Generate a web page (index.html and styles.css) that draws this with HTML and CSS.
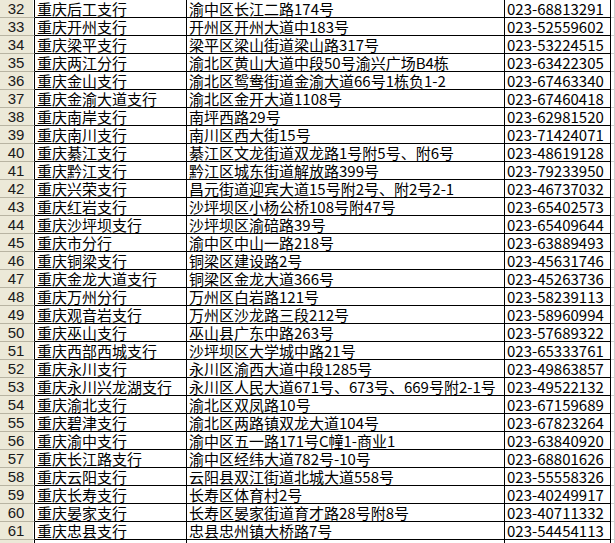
FILE: index.html
```html
<!DOCTYPE html>
<html lang="zh-CN">
<head>
<meta charset="utf-8">
<title>重庆支行列表</title>
<link rel="stylesheet" href="styles.css">
</head>
<body>
<div class="sheet">
  <div class="row"><div class="rh">32</div><div class="c a">重庆后工支行</div><div class="c b">渝中区长江二路174号</div><div class="c t">023-68813291</div><div class="e"></div></div>
  <div class="row"><div class="rh">33</div><div class="c a">重庆开州支行</div><div class="c b">开州区开州大道中183号</div><div class="c t">023-52559602</div><div class="e"></div></div>
  <div class="row"><div class="rh">34</div><div class="c a">重庆梁平支行</div><div class="c b">梁平区梁山街道梁山路317号</div><div class="c t">023-53224515</div><div class="e"></div></div>
  <div class="row"><div class="rh">35</div><div class="c a">重庆两江分行</div><div class="c b">渝北区黄山大道中段50号渝兴广场B4栋</div><div class="c t">023-63422305</div><div class="e"></div></div>
  <div class="row"><div class="rh">36</div><div class="c a">重庆金山支行</div><div class="c b">渝北区鸳鸯街道金渝大道66号1栋负1-2</div><div class="c t">023-67463340</div><div class="e"></div></div>
  <div class="row"><div class="rh">37</div><div class="c a">重庆金渝大道支行</div><div class="c b">渝北区金开大道1108号</div><div class="c t">023-67460418</div><div class="e"></div></div>
  <div class="row"><div class="rh">38</div><div class="c a">重庆南岸支行</div><div class="c b">南坪西路29号</div><div class="c t">023-62981520</div><div class="e"></div></div>
  <div class="row"><div class="rh">39</div><div class="c a">重庆南川支行</div><div class="c b">南川区西大街15号</div><div class="c t">023-71424071</div><div class="e"></div></div>
  <div class="row"><div class="rh">40</div><div class="c a">重庆綦江支行</div><div class="c b">綦江区文龙街道双龙路1号附5号、附6号</div><div class="c t">023-48619128</div><div class="e"></div></div>
  <div class="row"><div class="rh">41</div><div class="c a">重庆黔江支行</div><div class="c b">黔江区城东街道解放路399号</div><div class="c t">023-79233950</div><div class="e"></div></div>
  <div class="row"><div class="rh">42</div><div class="c a">重庆兴荣支行</div><div class="c b">昌元街道迎宾大道15号附2号、附2号2-1</div><div class="c t">023-46737032</div><div class="e"></div></div>
  <div class="row"><div class="rh">43</div><div class="c a">重庆红岩支行</div><div class="c b">沙坪坝区小杨公桥108号附47号</div><div class="c t">023-65402573</div><div class="e"></div></div>
  <div class="row"><div class="rh">44</div><div class="c a">重庆沙坪坝支行</div><div class="c b">沙坪坝区渝碚路39号</div><div class="c t">023-65409644</div><div class="e"></div></div>
  <div class="row"><div class="rh">45</div><div class="c a">重庆市分行</div><div class="c b">渝中区中山一路218号</div><div class="c t">023-63889493</div><div class="e"></div></div>
  <div class="row"><div class="rh">46</div><div class="c a">重庆铜梁支行</div><div class="c b">铜梁区建设路2号</div><div class="c t">023-45631746</div><div class="e"></div></div>
  <div class="row"><div class="rh">47</div><div class="c a">重庆金龙大道支行</div><div class="c b">铜梁区金龙大道366号</div><div class="c t">023-45263736</div><div class="e"></div></div>
  <div class="row"><div class="rh">48</div><div class="c a">重庆万州分行</div><div class="c b">万州区白岩路121号</div><div class="c t">023-58239113</div><div class="e"></div></div>
  <div class="row"><div class="rh">49</div><div class="c a">重庆观音岩支行</div><div class="c b">万州区沙龙路三段212号</div><div class="c t">023-58960994</div><div class="e"></div></div>
  <div class="row"><div class="rh">50</div><div class="c a">重庆巫山支行</div><div class="c b">巫山县广东中路263号</div><div class="c t">023-57689322</div><div class="e"></div></div>
  <div class="row"><div class="rh">51</div><div class="c a">重庆西部西城支行</div><div class="c b">沙坪坝区大学城中路21号</div><div class="c t">023-65333761</div><div class="e"></div></div>
  <div class="row"><div class="rh">52</div><div class="c a">重庆永川支行</div><div class="c b">永川区渝西大道中段1285号</div><div class="c t">023-49863857</div><div class="e"></div></div>
  <div class="row"><div class="rh">53</div><div class="c a">重庆永川兴龙湖支行</div><div class="c b">永川区人民大道671号、673号、669号附2-1号</div><div class="c t">023-49522132</div><div class="e"></div></div>
  <div class="row"><div class="rh">54</div><div class="c a">重庆渝北支行</div><div class="c b">渝北区双凤路10号</div><div class="c t">023-67159689</div><div class="e"></div></div>
  <div class="row"><div class="rh">55</div><div class="c a">重庆碧津支行</div><div class="c b">渝北区两路镇双龙大道104号</div><div class="c t">023-67823264</div><div class="e"></div></div>
  <div class="row"><div class="rh">56</div><div class="c a">重庆渝中支行</div><div class="c b">渝中区五一路171号C幢1-商业1</div><div class="c t">023-63840920</div><div class="e"></div></div>
  <div class="row"><div class="rh">57</div><div class="c a">重庆长江路支行</div><div class="c b">渝中区经纬大道782号-10号</div><div class="c t">023-68801626</div><div class="e"></div></div>
  <div class="row"><div class="rh">58</div><div class="c a">重庆云阳支行</div><div class="c b">云阳县双江街道北城大道558号</div><div class="c t">023-55558326</div><div class="e"></div></div>
  <div class="row"><div class="rh">59</div><div class="c a">重庆长寿支行</div><div class="c b">长寿区体育村2号</div><div class="c t">023-40249917</div><div class="e"></div></div>
  <div class="row"><div class="rh">60</div><div class="c a">重庆晏家支行</div><div class="c b">长寿区晏家街道育才路28号附8号</div><div class="c t">023-40711332</div><div class="e"></div></div>
  <div class="row"><div class="rh">61</div><div class="c a">重庆忠县支行</div><div class="c b">忠县忠州镇大桥路7号</div><div class="c t">023-54454113</div><div class="e"></div></div>
  <div class="row"><div class="rh"></div><div class="c a"></div><div class="c b"></div><div class="c t"></div><div class="e"></div></div>
</div>
</body>
</html>
```
FILE: styles.css
```css
html, body {
  margin: 0;
  padding: 0;
  background: #ffffff;
  overflow: hidden;
}
.sheet {
  display: flex;
  flex-direction: column;
  width: 615px;
}
.row {
  display: grid;
  grid-template-columns: 35px 152px 318px 106px 4px;
  height: 18px;
}
.rh {
  box-sizing: border-box;
  height: 18px;
  background: #ece9d8;
  border-bottom: 1px solid #b8b4a2;
  border-right: 1px solid #000;
  box-shadow: inset -1px 0 0 #ffffff;
  font-family: "Liberation Sans", Arial, sans-serif;
  font-size: 15px;
  line-height: 17px;
  color: #1a1a1a;
  text-align: center;
  padding-right: 2px;
}
.c {
  box-sizing: border-box;
  height: 18px;
  border-bottom: 1px solid #000;
  border-right: 1px solid #000;
  font-family: "Noto Sans CJK SC", sans-serif;
  font-size: 15px;
  line-height: 17px;
  color: #000;
  white-space: nowrap;
  padding-left: 2px;
}
.e {
  box-sizing: border-box;
  height: 18px;
  border-bottom: 1px solid #d0d0d0;
  border-right: 1px solid #d0d0d0;
}
```
